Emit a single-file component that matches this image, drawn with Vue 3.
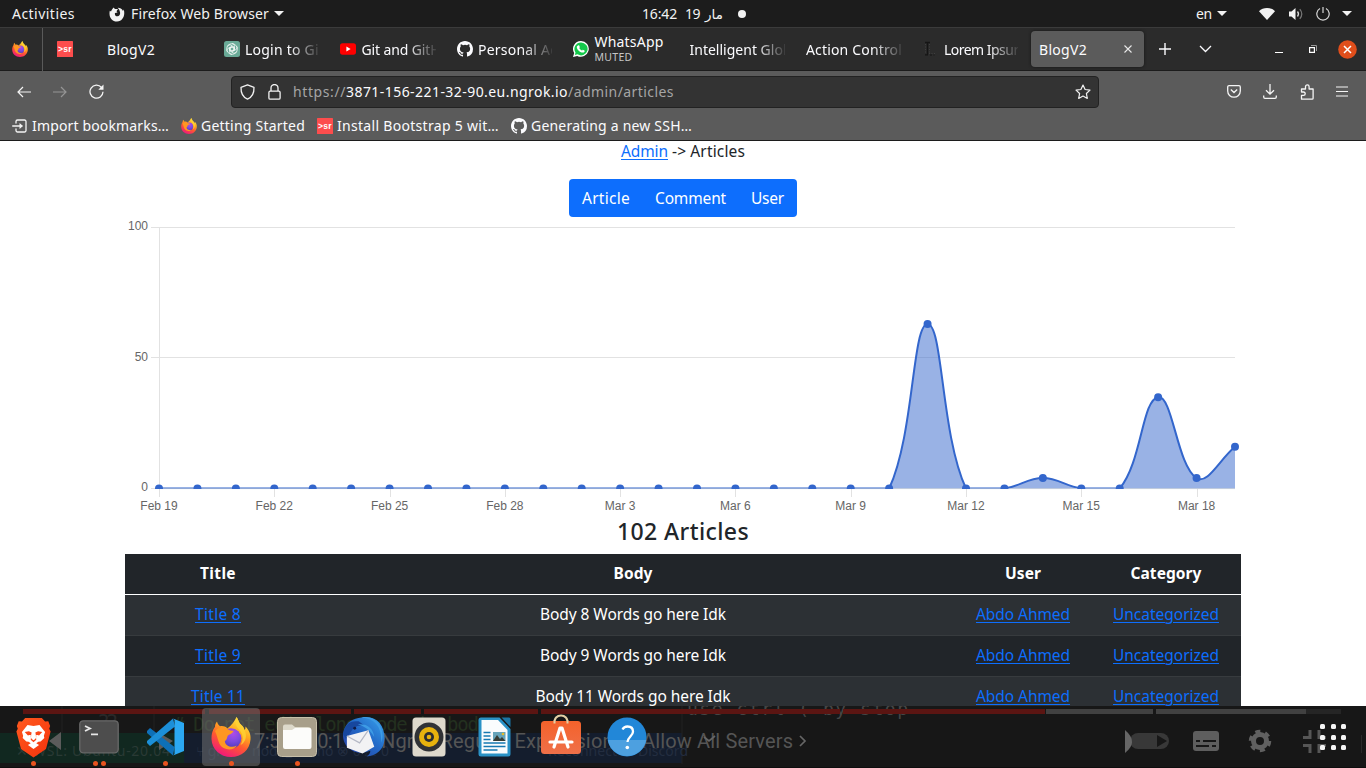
<script setup>
const setFit = (el, { value }) => {
  el.style.letterSpacing = '0px'
  el.style.width = 'auto'
  const natural = el.getBoundingClientRect().width
  const count = [...el.textContent.trim()].length
  el.style.letterSpacing = (value - natural) / count + 'px'
  el.style.width = value + 'px'
}
const vFit = { mounted: setFit }

const tabs = [
  { text: 'BlogV2', w: 48 },
  { text: 'Login to Git', w: 79, icon: 'gpt', fade: true },
  { text: 'Git and GitH', w: 79, icon: 'yt', fade: true },
  { text: 'Personal Acc', w: 86, icon: 'gh', fade: true },
  { text: 'WhatsApp', w: 69, icon: 'wa', sub: 'MUTED' },
  { text: 'Intelligent Glob', w: 102, fade: true },
  { text: 'Action Control', w: 96, fade: true },
  { text: 'Lorem Ipsum', w: 82, icon: 'lorem', fade: true },
  { text: 'BlogV2', w: 48, active: true },
]

const bookmarks = [
  { icon: 'import', text: 'Import bookmarks…', w: 137 },
  { icon: 'ff', text: 'Getting Started', w: 104 },
  { icon: 'sr', text: 'Install Bootstrap 5 wit…', w: 162 },
  { icon: 'gh', text: 'Generating a new SSH…', w: 161 },
]

const rows = [
  { title: 'Title 8', tw: 46, body: 'Body 8 Words go here Idk', bw: 186 },
  { title: 'Title 9', tw: 46, body: 'Body 9 Words go here Idk', bw: 186 },
  { title: 'Title 11', tw: 54, body: 'Body 11 Words go here Idk', bw: 195 },
]

const values = Array(29).fill(0)
Object.assign(values, { 20: 63, 23: 4, 26: 35, 27: 4, 28: 16 })
const labels = ['Feb 19', 'Feb 22', 'Feb 25', 'Feb 28', 'Mar 3', 'Mar 6', 'Mar 9', 'Mar 12', 'Mar 15', 'Mar 18']
const left = 34, right = 1110, top = 10.5, bottom = 271.5
const step = (right - left) / 28
const pts = values.map((v, i) => ({ x: left + i * step, y: bottom - (v / 100) * (bottom - top) }))
const clampY = y => Math.min(bottom, Math.max(top, y))
const ctrl = pts.map((c, i) => {
  const p = pts[i - 1] || c
  const n = pts[i + 1] || c
  const a = Math.hypot(c.x - p.x, c.y - p.y)
  const b = Math.hypot(n.x - c.x, n.y - c.y)
  const fa = 0.4 * a / (a + b), fb = 0.4 * b / (a + b)
  return {
    px: c.x - fa * (n.x - p.x), py: clampY(c.y - fa * (n.y - p.y)),
    nx: c.x + fb * (n.x - p.x), ny: clampY(c.y + fb * (n.y - p.y)),
  }
})
const line = pts.map((p, i) => i === 0
  ? `M${p.x} ${p.y}`
  : `C${ctrl[i - 1].nx} ${ctrl[i - 1].ny} ${ctrl[i].px} ${ctrl[i].py} ${p.x} ${p.y}`).join(' ')
const area = `${line} L${right} ${bottom} L${left} ${bottom} Z`

const apps = [
  { id: 'brave', dots: 1 }, { id: 'terminal', dots: 2 }, { id: 'code', dots: 1 },
  { id: 'ff', dots: 1, focus: true }, { id: 'files', dots: 1 }, { id: 'mail', dots: 0 },
  { id: 'music', dots: 0 }, { id: 'writer', dots: 0 }, { id: 'store', dots: 0 }, { id: 'help', dots: 0 },
]
</script>

<template>
  <div class="screen">
    <svg class="defs" width="0" height="0" aria-hidden="true">
      <defs>
        <linearGradient id="gFox" x1="0.8" y1="0" x2="0.3" y2="1">
          <stop offset="0" stop-color="#fff04a" /><stop offset=".35" stop-color="#ffab1f" />
          <stop offset=".62" stop-color="#ff5a2f" /><stop offset="1" stop-color="#f0157e" />
        </linearGradient>
        <radialGradient id="gGlobe" cx=".6" cy=".25" r=".8">
          <stop offset="0" stop-color="#b04be8" /><stop offset=".5" stop-color="#7a4ae0" /><stop offset="1" stop-color="#4a36b0" />
        </radialGradient>
        <linearGradient id="gBrave" x1="0" y1="0" x2="1" y2="1"><stop offset="0" stop-color="#ff5a1f" /><stop offset="1" stop-color="#f5320c" /></linearGradient>
        <linearGradient id="gMail" x1="0" y1="1" x2="1" y2="0"><stop offset="0" stop-color="#25389e" /><stop offset=".55" stop-color="#236ac8" /><stop offset="1" stop-color="#39a5ee" /></linearGradient>
        <linearGradient id="gStore" x1="0" y1="0" x2="0" y2="1"><stop offset="0" stop-color="#f4622b" /><stop offset="1" stop-color="#ef7049" /></linearGradient>
        <symbol id="ff" viewBox="0 0 40 40">
          <path fill="url(#gFox)" d="M25.5 0c1.5 2 2.2 4.600 3.200 6.200 2.500 2.300 4.400 4.100 4.900 7 .9-1.300 1-2.700.8-3.800C38 13 40 17 39.500 22.500 38.700 33 30.500 40 20 40S.8 32.500.5 22C.3 17 1.600 13 4 9.800c0-2 .7-3.800 2-5.300.5 2 1.500 3.500 3 4.700 3-.6 5.200.2 7.500 2.200C19 9 22 7.500 25.500 0z" />
          <circle cx="20" cy="21.500" r="10.300" fill="url(#gGlobe)" />
          <path fill="#ff9722" d="M4 14c3.500-4 9-4.500 13-1.800 1.200 1.200 3.500 1.600 5.500 1.600-.6 2.600-3.800 3.600-5.500 4.600-1.200 1.200-.4 4-3.200 5.600.4 5 7 7.500 12 4.500-2.800 5.500-13.600 5.500-17.500-2C6.500 22 6 18 4 14z" />
          <path fill="#ffd334" opacity=".8" d="M25.500 0c-2 6-.5 9 2.500 12.500 4 4.500 5 10 1.500 15.500 5-2.500 7-9 4.100-14.800-.5-2.900-2.400-4.700-4.900-7C27.700 4.600 27 2 25.500 0z" />
        </symbol>
        <symbol id="sr" viewBox="0 0 16 16">
          <rect width="16" height="16" rx=".6" fill="#fd4d4d" />
          <text x="1" y="10.600" font-family="Liberation Sans, sans-serif" font-size="8.500" font-weight="700" fill="#fff" textLength="13.500">&gt;sr</text>
        </symbol>
        <symbol id="gh" viewBox="0 0 16 16">
          <path fill="#fbfbfe" d="M8 0C3.580 0 0 3.580 0 8c0 3.540 2.290 6.530 5.470 7.590.4.070.55-.17.550-.38v-1.490c-2.010.37-2.530-.49-2.690-.94-.09-.23-.48-.94-.82-1.130-.28-.15-.68-.52-.01-.53.63-.01 1.080.58 1.230.82.720 1.210 1.870.87 2.330.66.070-.52.280-.87.510-1.070-1.780-.2-3.640-.89-3.640-3.950 0-.87.310-1.590.82-2.150-.08-.2-.36-1.020.080-2.120 0 0 .67-.21 2.200.82a7.600 7.600 0 0 1 4 0c1.530-1.040 2.200-.82 2.200-.82.440 1.100.160 1.920.080 2.120.510.560.820 1.270.820 2.150 0 3.070-1.870 3.750-3.650 3.950.290.250.540.730.540 1.480v2.200c0 .21.150.46.550.38A8.010 8.010 0 0 0 16 8c0-4.420-3.580-8-8-8z" />
        </symbol>
        <symbol id="gpt" viewBox="0 0 16 16">
          <rect width="16" height="16" rx="2.500" fill="#6aaa97" />
          <g fill="none" stroke="#fff" stroke-width=".75" transform="translate(.4 .4) scale(.95)">
            <path d="M8 2.200a2.600 2.600 0 0 1 2.500 2v4.500L7.900 10.200 5.300 8.700" /><path d="M12.800 5a2.600 2.600 0 0 1-.2 3.300L8.700 10.600 6 9V6" />
            <path d="M12.900 10.800a2.600 2.600 0 0 1-3.300 1.500L5.700 10V7l2.600-1.500" /><path d="M8 13.800a2.600 2.600 0 0 1-2.500-2V7.300L8.100 5.800l2.600 1.500" />
            <path d="M3.200 11a2.600 2.600 0 0 1 .2-3.300L7.300 5.400 10 7v3" /><path d="M3.100 5.200a2.600 2.600 0 0 1 3.300-1.500L10.300 6v3l-2.600 1.500" />
            <circle cx="8" cy="8" r="5.600" />
          </g>
        </symbol>
        <symbol id="yt" viewBox="0 0 16 16"><rect y="2.300" width="16" height="11.400" rx="2.600" fill="#f00" /><path fill="#fff" d="M6.400 5.600v4.800L10.600 8z" /></symbol>
        <symbol id="wa" viewBox="0 0 16 16">
          <path fill="#fff" d="M8 0a7.900 7.900 0 0 0-6.800 12L0 16l4.200-1.100A7.900 7.900 0 1 0 8 0z" />
          <path fill="#14c84b" d="M8 1.400a6.500 6.500 0 0 0-5.500 10L1.900 14l2.600-.7A6.500 6.500 0 1 0 8 1.400z" />
          <path fill="#fff" d="M5.400 4.200c.5-.1.700 0 .9.500l.5 1.200c.1.400-.5.900-.6 1.200.7 1.300 1.500 2 2.700 2.500.4-.2.700-1 1-.9l1.500.7c.4.200.2 1.100-.1 1.500-.9 1-2.300.8-3.900 0-1.600-.9-3-2.400-3.500-4-.3-1.100.2-2.400 1.500-2.700z" />
        </symbol>
        <symbol id="lorem" viewBox="0 0 16 16"><path d="M2 1.500h5M4.500 1.500v12M2 13.800h3" stroke="#151515" stroke-width="1.300" fill="none" /><path d="M2.500 3v10M6.500 3v10M6 12.500h6" stroke="#484848" stroke-width=".7" stroke-dasharray="1 1.500" /><path d="M7 14h2M10.500 14h1" stroke="#151515" /></symbol>
        <symbol id="import" viewBox="0 0 16 16"><g fill="none" stroke="#f3f3f3" stroke-width="1.300" stroke-linecap="round" stroke-linejoin="round"><path d="M4 5V3.500A1.500 1.500 0 0 1 5.500 2h7A1.500 1.500 0 0 1 14 3.500v9a1.500 1.500 0 0 1-1.500 1.500h-7A1.500 1.500 0 0 1 4 12.500V11M.7 8h9" /></g><path d="M7.500 5L11 8l-3.500 3z" fill="#f3f3f3" /></symbol>
        <symbol id="brave" viewBox="0 0 40 44">
          <path fill="url(#gBrave)" d="M11 1h18l3.500 3.800 3.500-.3 2 5-1 3 1.500 3-5 19L20 43.500 6.500 34.500l-5-19L3 12.500l-1-3 2-5 3.500.3z" />
          <path fill="#fff" d="M13.500 8.500l6.500 1.200 6.500-1.200 6 7.500-1.300 4 .5 2.500-4 3.800-2.400.3-2.300 1.500 3 1.900L20 34.500 14 30l3-1.900-2.300-1.500-2.400-.3-4-3.800.5-2.500L7.500 16z" />
          <path fill="#fa4517" d="M10.500 16l4.500-.8 3 1.500-1 4.800 1 2L20 25l2-1.500 1-2-1-4.800 3-1.500 4.500.8-3.500 3.800-1.500-.5-2 .3.500 4.900L20 27l-3-2.500.5-4.900-2-.3-1.500.5z" />
        </symbol>
        <symbol id="terminal" viewBox="0 0 40 34">
          <rect x=".8" y=".8" width="38.400" height="32" rx="3.500" fill="#4d4d4d" stroke="#696969" stroke-width="1.300" />
          <path d="M6 6l5 2.500L6 11M12 14.300h7" fill="none" stroke="#e8e8e8" stroke-width="1.800" />
        </symbol>
        <symbol id="code" viewBox="0 0 38 38">
          <path fill="#0e70b8" d="M1 13l3-3 24.500 19L27 37.500 1 15z" /><path fill="#1c8fd8" d="M1 25l3 3L29 8.500 27 .5 1 23z" />
          <path fill="#2ba8f2" d="M27 .5L38 5v28l-11 4.500 1.500-1.500V2z" />
        </symbol>
        <symbol id="files" viewBox="0 0 40 40">
          <rect x=".5" y=".5" width="39" height="39" rx="4" fill="#a89f8a" stroke="#c8c0aa" />
          <path fill="#ddd9ca" d="M6 9.500A2 2 0 0 1 8 7.500h7l3 2.500H31a3 3 0 0 1 3 3v5H6z" /><path fill="#fcfcfa" d="M6 13h9l3-2h14.500a2 2 0 0 1 2 2v17a2 2 0 0 1-2 2H8a2 2 0 0 1-2-2z" />
        </symbol>
        <symbol id="mail" viewBox="0 0 44 42">
          <path fill="url(#gMail)" d="M20 1c15-3 24 8 23.500 22C43 34 35 40 25 41c3-2 4-4 4-6-8 3-16 3-21-2C1 28 0 20 2 14 5 5 11 2 20 1z" />
          <path fill="#17479e" d="M1 18C3 7 9 4 17 5l7 5c-7-2-12 0-15 6l-5 7z" /><path fill="#3d9be5" d="M20 1c15 1 21 11 20 26 5-12-3-29-20-26zM16 8c10-1 16 4 17 13-5-8-9-10-17-13z" />
          <path fill="#f2f2f4" d="M5 20l22-6 6 17-12 7L5 32z" /><path d="M5 20l13 7 9-13" fill="none" stroke="#b6b9c6" stroke-width="1.200" /><circle cx="13" cy="12" r="1.500" fill="#101a43" />
        </symbol>
        <symbol id="music" viewBox="0 0 34 40">
          <rect x=".5" y=".5" width="33" height="39" rx="3.500" fill="#ded9cc" /><circle cx="17" cy="20" r="14.500" fill="#303236" />
          <circle cx="17" cy="20" r="10" fill="#e7b20d" /><circle cx="17" cy="20" r="5" fill="#2b2d31" /><circle cx="17" cy="20" r="2.300" fill="#e7b20d" />
        </symbol>
        <symbol id="writer" viewBox="0 0 34 40">
          <path fill="#2a92c6" d="M3 .5h18.500L32.500 12v25a2.500 2.500 0 0 1-2.500 2.500H3A2.500 2.500 0 0 1 .5 37V3A2.500 2.500 0 0 1 3 .5z" /><path fill="#fafcfd" d="M3.500 3h16.500L29.500 13v23.500h-26z" />
          <path fill="#1a75a5" d="M23.500.5H31a1.500 1.500 0 0 1 1.500 1.500v8z" />
          <path d="M5.500 15.500h7M5.500 19h7M5.500 22.500h7M5.500 26h22M5.500 29.500h22M5.500 33h14" stroke="#1679b2" stroke-width="1.500" /><rect x="15" y="15" width="12.500" height="9" fill="#66a4ba" /><path d="M15 24l4-6 3 4 2-2 3.500 4z" fill="#373d35" /><circle cx="25" cy="17" r="1.300" fill="#e6bc2a" />
        </symbol>
        <symbol id="store" viewBox="0 0 40 42">
          <path d="M13.500 10C12-1.500 28-1.500 26.500 10" fill="none" stroke="#e3cfa5" stroke-width="2" /><rect y="7" width="40" height="33" rx="3.500" fill="url(#gStore)" />
          <path d="M13.500 9.500v-3M26.500 9.500v-3" stroke="#e3cfa5" stroke-width="2" />
          <path d="M13 33l6-19h2l6 19M9 28h22" fill="none" stroke="#fff" stroke-width="3.200" stroke-linejoin="round" stroke-linecap="round" />
        </symbol>
        <symbol id="help" viewBox="0 0 40 40">
          <circle cx="20" cy="20" r="19.500" fill="#2287d8" /><path fill="#4da0e0" d="M.8 23h38.400a19.500 19.500 0 0 1-38.400 0z" />
          <path d="M15.500 12.500c1-2 3-3 5-3 3.500 0 5.500 2.200 5.500 5.200 0 4-5.500 5.800-5.500 10.300" fill="none" stroke="#fff" stroke-width="2.300" /><circle cx="20.300" cy="30.500" r="1.800" fill="#fff" />
        </symbol>
      </defs>
    </svg>

    <header class="topbar">
      <span v-fit="63" class="activities">Activities</span>
      <svg class="menu-fox" width="16" height="16" viewBox="0 0 16 16"><path fill="#f2f2f2" fill-rule="evenodd" d="M4.500 1.500L6 3h3l-1.500 2.200 1 1.300-2.500.6c-.6 2.200 1 3.400 2.500 3.200 2-.2 3-2 2.500-4C10.600 4 9.800 3 8.700 1.800 11 1.800 13 3 14 5l.7-1.500C16.500 9 14 15.500 8 15.500 2.500 15.500-.5 10.500.8 4.800L2 5.500C2.500 4 3.500 3 4.500 1.500z" /></svg>
      <span v-fit="138" class="menu-name">Firefox Web Browser</span>
      <i class="caret" />
      <div class="clock"><span v-fit="35">16:42</span><span class="date" dir="ltr"><span v-fit="15">19</span><span class="ar">مار</span></span><i class="dot" /></div>
      <div class="status">
        <span v-fit="16">en</span><i class="caret" />
        <svg class="wifi" width="16" height="14" viewBox="0 0 16 14"><path d="M0 4.200C4-.2 12-.2 16 4.200L8 13z" fill="#f2f2f2" /></svg>
        <svg class="vol" width="16" height="14" viewBox="0 0 16 14"><path d="M1 4.500h2.500L7.500 1v12L3.500 9.500H1z" fill="#f2f2f2" /><path d="M9.500 4.500c1.200 1.500 1.200 3.500 0 5" stroke="#d8d8d8" fill="none" stroke-width="1.300" /><path d="M11.800 2.200c2.500 3 2.500 6.600 0 9.600" stroke="#777" fill="none" stroke-width="1.200" /></svg>
        <svg class="power" width="14" height="14" viewBox="0 0 14 14"><path d="M4 1.500a6.200 6.200 0 1 0 6 0M7 0v6" stroke="#d5d5d5" fill="none" stroke-width="1.200" /></svg>
        <i class="caret end" />
      </div>
    </header>

    <nav class="tabbar">
      <div class="pinned home"><svg width="16" height="16"><use href="#ff" /></svg></div>
      <div class="pinned"><svg width="16" height="16"><use href="#sr" /></svg></div>
      <div class="tabs">
        <div v-for="(t, i) in tabs" :key="i" class="tab" :class="{ active: t.active }">
          <svg v-if="t.icon" class="fav" width="16" height="16"><use :href="'#' + t.icon" /></svg>
          <div class="label" :class="{ fade: t.fade, stacked: t.sub }">
            <span v-fit="t.w">{{ t.text }}</span>
            <small v-if="t.sub" v-fit="38">{{ t.sub }}</small>
          </div>
          <svg v-if="t.active" class="x" width="8" height="8" viewBox="0 0 8 8"><path d="M.5.5l7 7M7.500.5l-7 7" stroke="#e9e9e9" stroke-width="1.100" /></svg>
        </div>
      </div>
      <svg class="plus" width="12" height="12" viewBox="0 0 12 12"><path d="M6 0v12M0 6h12" stroke="#fbfbfe" stroke-width="1.400" /></svg>
      <svg class="down" width="13" height="8" viewBox="0 0 13 8"><path d="M1 1l5.500 5.500L12 1" stroke="#fbfbfe" stroke-width="1.300" fill="none" /></svg>
      <svg class="min" width="8" height="2"><rect width="8" height="1" y="1" fill="#fff" /></svg>
      <svg class="max" width="8" height="8" viewBox="0 0 8 8"><path d="M.6 2.600h4.800v4.800H.6z" stroke="#fff" stroke-width="1.200" fill="none" /><path d="M2 .5h5.500V6" stroke="#999" fill="none" /></svg>
      <svg class="close" width="19" height="19" viewBox="0 0 19 19"><circle cx="9.500" cy="9.500" r="9.300" fill="#e04e1b" /><path d="M6 6l7 7M13 6l-7 7" stroke="#fff" stroke-width="1.500" /></svg>
    </nav>

    <div class="navbar">
      <svg class="back" width="14" height="12" viewBox="0 0 14 12"><path d="M14 6H1M6 1L1 6l5 5" stroke="#f5f5f5" stroke-width="1.200" fill="none" /></svg>
      <svg class="fwd" width="14" height="12" viewBox="0 0 14 12"><path d="M0 6h13M8 1l5 5-5 5" stroke="#959595" stroke-width="1.200" fill="none" /></svg>
      <svg class="reload" width="15" height="15" viewBox="0 0 15 15"><path d="M12.500 3.500A6.500 6.500 0 1 0 14 7.800" stroke="#f5f5f5" stroke-width="1.300" fill="none" /><path d="M14.500.5v5.200H9.300z" fill="#f5f5f5" /></svg>
      <div class="urlbar">
        <svg width="15" height="16" viewBox="0 0 15 16"><path d="M7.500.8l6.500 2.500c.2 5.700-2 10-6.500 11.900C3 13.300.8 9 1 3.300z" stroke="#f2f2f2" stroke-width="1.300" fill="none" stroke-linejoin="round" /></svg>
        <svg class="lock" width="13" height="16" viewBox="0 0 13 16"><rect x=".9" y="7.200" width="11.200" height="8" rx="1.300" stroke="#f2f2f2" stroke-width="1.300" fill="none" /><path d="M3 7V4a3.500 3.500 0 0 1 7 0v3" stroke="#f2f2f2" stroke-width="1.300" fill="none" /></svg>
        <span class="url"><span v-fit="53">https://</span><b v-fit="222">3871-156-221-32-90.eu.ngrok.io</b><span v-fit="106">/admin/articles</span></span>
        <svg class="star" width="16" height="16" viewBox="0 0 16 16"><path d="M8 1l2.100 4.500 4.900.6-3.600 3.400.9 4.900L8 12l-4.300 2.400.9-4.900L1 6.100l4.900-.6z" stroke="#f2f2f2" stroke-width="1.200" fill="none" stroke-linejoin="round" /></svg>
      </div>
      <div class="tools">
        <svg width="14" height="13" viewBox="0 0 14 13"><path d="M2 .7h10a1.300 1.300 0 0 1 1.300 1.300v4c0 3.500-2.800 6.200-6.300 6.200S.7 9.500.7 6V2A1.300 1.300 0 0 1 2 .7zM3.800 4.500L7 7.500l3.200-3" stroke="#f5f5f5" stroke-width="1.300" fill="none" /></svg>
        <svg width="14" height="15" viewBox="0 0 14 15"><path d="M7 0v10M3 6.200l4 4 4-4M.7 11.500V13c0 .8.500 1.300 1.300 1.300h10c.8 0 1.300-.5 1.300-1.300v-1.500" stroke="#f5f5f5" stroke-width="1.300" fill="none" /></svg>
        <svg width="14" height="16" viewBox="0 0 14 16"><path d="M1.500 15.200v-3.800h2a1.700 1.700 0 0 0 0-3.400h-2V5h4V2.700a1.800 1.800 0 0 1 3.600 0V5h4v9.200a1 1 0 0 1-1 1z" stroke="#f5f5f5" stroke-width="1.300" fill="none" stroke-linejoin="round" /></svg>
        <svg width="12" height="11" viewBox="0 0 12 11"><path d="M0 1h12M0 5.500h12M0 10h12" stroke="#f5f5f5" stroke-width="1.200" /></svg>
      </div>
    </div>

    <div class="bookmarks">
      <div v-for="b in bookmarks" :key="b.text" class="bm"><svg width="16" height="16"><use :href="'#' + b.icon" /></svg><span v-fit="b.w">{{ b.text }}</span></div>
    </div>

    <main class="page">
      <div class="crumbs"><a v-fit="47">Admin</a><span v-fit="73">-&gt; Articles</span></div>
      <div class="btns"><span v-fit="48">Article</span><span v-fit="71">Comment</span><span v-fit="33">User</span></div>
      <svg class="chart" width="1116" height="300" viewBox="0 0 1116 300">
        <defs><clipPath id="plot"><rect x="28" y="0" width="1090" height="272" /></clipPath></defs>
        <path d="M26 10.500H1110M26 140.500H1110M26 271.500H1110M34.500 10V279" stroke="#e2e2e2" fill="none" />
        <path v-for="(l, i) in labels" :key="l" :d="`M${Math.round(left + i * 3 * step) + 0.5} 272v8`" stroke="#e2e2e2" />
        <g clip-path="url(#plot)">
          <path :d="area" fill="#3366cc" fill-opacity=".5" /><path :d="line" fill="none" stroke="#3366cc" stroke-width="2" />
        </g>
        <path d="M34 271.600H1110" stroke="#c6cede" stroke-width="1" stroke-opacity=".7" />
        <g clip-path="url(#plot)"><circle v-for="(p, i) in pts" :key="i" :cx="p.x" :cy="p.y" r="4" fill="#3366cc" /></g>
        <g class="axis">
          <text x="23" y="13" text-anchor="end">100</text><text x="23" y="144" text-anchor="end">50</text><text x="23" y="274" text-anchor="end">0</text>
          <text v-for="(l, i) in labels" :key="l" :x="left + i * 3 * step" y="293" text-anchor="middle">{{ l }}</text>
        </g>
      </svg>
      <h4><span v-fit="132">102 Articles</span></h4>
      <div class="table">
        <div class="tr head"><div><span v-fit="36">Title</span></div><div><span v-fit="39">Body</span></div><div><span v-fit="36">User</span></div><div><span v-fit="71">Category</span></div></div>
        <div v-for="r in rows" :key="r.title" class="tr">
          <div><a v-fit="r.tw">{{ r.title }}</a></div><div><span v-fit="r.bw">{{ r.body }}</span></div><div><a v-fit="94">Abdo Ahmed</a></div><div><a v-fit="106">Uncategorized</a></div>
        </div>
      </div>
    </main>

    <footer class="dock">
      <div class="ghost">
        <svg width="1366" height="62" viewBox="0 0 1366 62">
          <rect width="1366" height="62" fill="#171717" />
          <rect x="0" y="27" width="184" height="30" fill="#112820" /><rect x="184" y="27" width="498" height="30" fill="#141d2d" />
          <path d="M62 0v27M154 0v27M682 0v58" stroke="#222" />
          <g font-family="DejaVu Sans Mono, monospace" font-size="19" fill="#23301f">
            <text x="98" y="22" fill="#292929" textLength="20">22</text><text x="173" y="25" textLength="316"># Do not edit long code in body</text>
          </g>
          <g font-family="Noto Sans, sans-serif" font-size="14" fill="#2a3a35"><text x="16" y="50" textLength="154">✕ WSL: Ubuntu-20.04</text><text x="196" y="50" fill="#232d40">⑂ git</text><text x="252" y="50" fill="#232d40">node_ demo   ⊗ 0 ⚠ 0</text><text x="548" y="50" fill="#232d40" textLength="140">Reconnect to Discord</text></g>
          <g font-family="DejaVu Sans Mono, monospace" font-size="18" fill="#464646"><text x="687" y="9" textLength="221">use ctrl ( by stop</text></g>
          <path d="M23 5.500h182M209 5.500h142M354 5.500h67M424 5.500h114M541 5.500h299M843 5.500h202" stroke="#5b1512" stroke-width="5" />
          <path d="M1046 5.500h107M1156 5.500h150" stroke="#414141" stroke-width="5" /><path d="M1306 5.500h35" stroke="#252525" stroke-width="5" />
          <path d="M61 26v18L49 35zM159 27l14 8-14 9z" fill="#5b5b5b" />
          <g font-family="Roboto, sans-serif" font-size="20" fill="#555"><text x="254" y="42" textLength="100">7:54 / 10:11</text><text x="381" y="42" textLength="412">Ngrok Regular Expression to Allow All Servers</text></g>
          <path d="M800 30l5 5-5 5M704 31l5 4 6-5" fill="none" stroke="#666" stroke-width="1.700" />
          <rect x="1130" y="27" width="39" height="16" rx="8" fill="#383838" /><path d="M1125 24v23q14-11 0-23z" fill="#666" /><path d="M1157 29v12l10-6z" fill="#171717" />
          <rect x="1193" y="25" width="26" height="20" rx="3" fill="#5e5e5e" /><path d="M1196 35h4M1203 35h13M1196 40h13M1212 40h4" stroke="#171717" stroke-width="2" />
          <circle cx="1260" cy="35" r="6.500" fill="none" stroke="#606060" stroke-width="5" /><circle cx="1260" cy="35" r="9.500" fill="none" stroke="#606060" stroke-width="3.500" stroke-dasharray="5 4.950" />
          <path d="M1303 31.500h7V24M1303 39.500h7V47M1326 31.500h-7V24M1326 39.500h-7V47" fill="none" stroke="#565656" stroke-width="3" />
          <path d="M1361.500 29v18" stroke="#2a2a2a" /><path d="M0 61.500h1366" stroke="#0e0e0e" />
        </svg>
      </div>
      <div class="apps">
        <div v-for="a in apps" :key="a.id" class="app" :class="{ focus: a.focus }">
          <svg class="glyph" :class="'g-' + a.id"><use :href="'#' + a.id" /></svg>
          <div class="dots"><i v-for="d in a.dots" :key="d" /></div>
        </div>
      </div>
      <div class="launcher"><i v-for="n in 9" :key="n" /></div>
    </footer>
  </div>
</template>

<style>
html, body { margin: 0; overflow: hidden; background: #fff; }
</style>
<style scoped>
.screen { width: 1366px; height: 768px; display: flex; flex-direction: column; position: relative; overflow: hidden; font: 14px/20px "Noto Sans", "DejaVu Sans", sans-serif; color: #f2f2f2; background: #fff; }
.screen * { box-sizing: border-box; }
.defs { position: absolute; }
svg { display: block; flex: none; }
span, b, a, small { display: inline-block; white-space: nowrap; }
.topbar { height: 27px; flex: none; background: #1c1c1c; display: flex; align-items: center; padding-left: 12px; position: relative; }
.menu-fox { margin-left: 34px; margin-right: 6px; }
.caret { width: 0; height: 0; border: 5px solid transparent; border-top-color: #f2f2f2; border-bottom: 0; margin-left: 5px; }
.clock { margin-left: 358px; display: flex; align-items: center; }
.date { display: flex; margin-left: 8px; gap: 5px; direction: ltr; }
.ar { width: 20px; font-family: "DejaVu Sans", sans-serif; font-size: 13.500px; }
.dot { width: 8px; height: 8px; border-radius: 50%; background: #f2f2f2; margin-left: 13px; }
.status { display: flex; align-items: center; margin-left: auto; padding-right: 14.500px; }
.wifi { margin-left: 32px; } .vol { margin-left: 13px; } .power { margin-left: 12px; } .end { margin-left: 11.500px; }

.tabbar { height: 44px; flex: none; background: #2b2b2b; border-top: 1px solid #3b3b3b; border-bottom: 1px solid #1c1c1c; display: flex; align-items: center; color: #fbfbfe; }
.pinned { width: 46px; padding-left: 14px; }
.home { width: 43px; height: 43px; padding-left: 12px; border-right: 1px solid #5a5a5a; display: flex; align-items: center; }
.tabs { display: flex; gap: 3.500px; margin-left: 9.500px; }
.tab { width: 113px; height: 36px; border-radius: 4px; padding: 0 9px 0 8.500px; display: flex; align-items: center; }
.tab.active { background: #5b5b5b; box-shadow: 0 0 3px #151515; }
.fav { margin-right: 5.500px; }
.label { flex: 1; min-width: 0; overflow: hidden; padding-top: 1px; }
.fade { mask-image: linear-gradient(to right, #000 calc(100% - 30px), transparent calc(100% + 3px)); }
.stacked { padding: 0; line-height: 16px; display: flex; flex-direction: column; align-items: flex-start; overflow: visible; }
.stacked small { font-size: 10.500px; line-height: 14px; color: #c6c6c6; }
.x { margin-right: 3px; }
.plus { margin-left: 15.500px; } .down { margin-left: 28px; } .min { margin: 5px 0 0 63px; } .max { margin-left: 26px; } .close { margin-left: 21px; }

.navbar { height: 41px; flex: none; background: #5b5b5b; display: flex; align-items: center; padding-left: 17px; }
.fwd { margin-left: 22px; } .reload { margin-left: 22px; }
.urlbar { width: 868px; height: 32px; margin-left: 127px; background: #333; border: 1px solid #222; border-radius: 4px; display: flex; align-items: center; padding: 0 7px 0 8px; }
.lock { margin-left: 13px; }
.url { display: flex; margin-left: 12px; color: #a5a5a5; }
.url b { color: #fbfbfe; font-weight: 400; }
.star { margin-left: auto; }
.tools { display: flex; align-items: center; margin-left: 128px; gap: 22.300px; }
.bookmarks { height: 29px; flex: none; background: #5b5b5b; border-bottom: 1px solid #1c1c1c; display: flex; gap: 12px; padding-left: 12px; align-items: center; color: #fbfbfe; }
.bm { display: flex; align-items: center; gap: 4px; }

.page { width: 1116px; margin: 0 auto; color: #212529; font-size: 15.500px; line-height: 24px; display: flex; flex-direction: column; align-items: center; }
.page a { color: #0d6efd; text-decoration: underline; text-underline-offset: 2px; text-decoration-thickness: 1px; }
.crumbs { height: 38px; padding-top: 0; display: flex; gap: 4px; margin-top: -2px; }
.btns { margin-top: 2px; height: 38px; background: #0d6efd; color: #fff; border-radius: 4px; padding: 7px 13px; display: flex; gap: 25px; }
.chart { height: 300px; }
.axis { font: 12px "Liberation Sans", sans-serif; fill: #666; }
h4 { margin: 0; font-size: 23px; line-height: 28px; font-weight: 500; }
.table { width: 1116px; margin-top: 9px; color: #fff; }
.tr { display: grid; grid-template-columns: 186px 644px 136px 150px; height: 41px; text-align: center; background: #212529; border-bottom: 1px solid #373b3e; line-height: 24px; }
.tr > div { padding-top: 7px; }
.tr.head { font-weight: 700; border-color: #fff; }
.tr:nth-child(even) { background: #2c3034; }

.dock { position: absolute; left: 0; right: 0; bottom: 0; height: 62px; overflow: hidden; background: #171717; }
.ghost { position: absolute; inset: 0; }
.apps { position: relative; display: flex; gap: 8px; padding: 2px 0 0 4px; }
.app { width: 58px; height: 58px; border-radius: 4px; display: flex; align-items: center; justify-content: center; position: relative; }
.focus { background: rgba(120, 120, 120, .5); }
.glyph { width: 40px; height: 40px; }
.g-brave { width: 37px; height: 43px; } .g-terminal { width: 40px; height: 34px; } .g-code { width: 38px; height: 38px; } .g-mail { width: 43px; height: 42px; } .g-music, .g-writer { width: 34px; }
.g-store { height: 42px; margin-top: -5px; }
.dots { position: absolute; bottom: 0; left: 0; right: 0; display: flex; justify-content: center; gap: 3px; }
.dots i { width: 5px; height: 5px; border-radius: 50%; background: #e95420; }
.launcher { position: absolute; left: 1320px; top: 18px; display: grid; grid-template-columns: repeat(3, 5px); gap: 5.500px; }
.launcher i { width: 5px; height: 5px; border-radius: 1.500px; background: #f4f4f4; }
</style>
